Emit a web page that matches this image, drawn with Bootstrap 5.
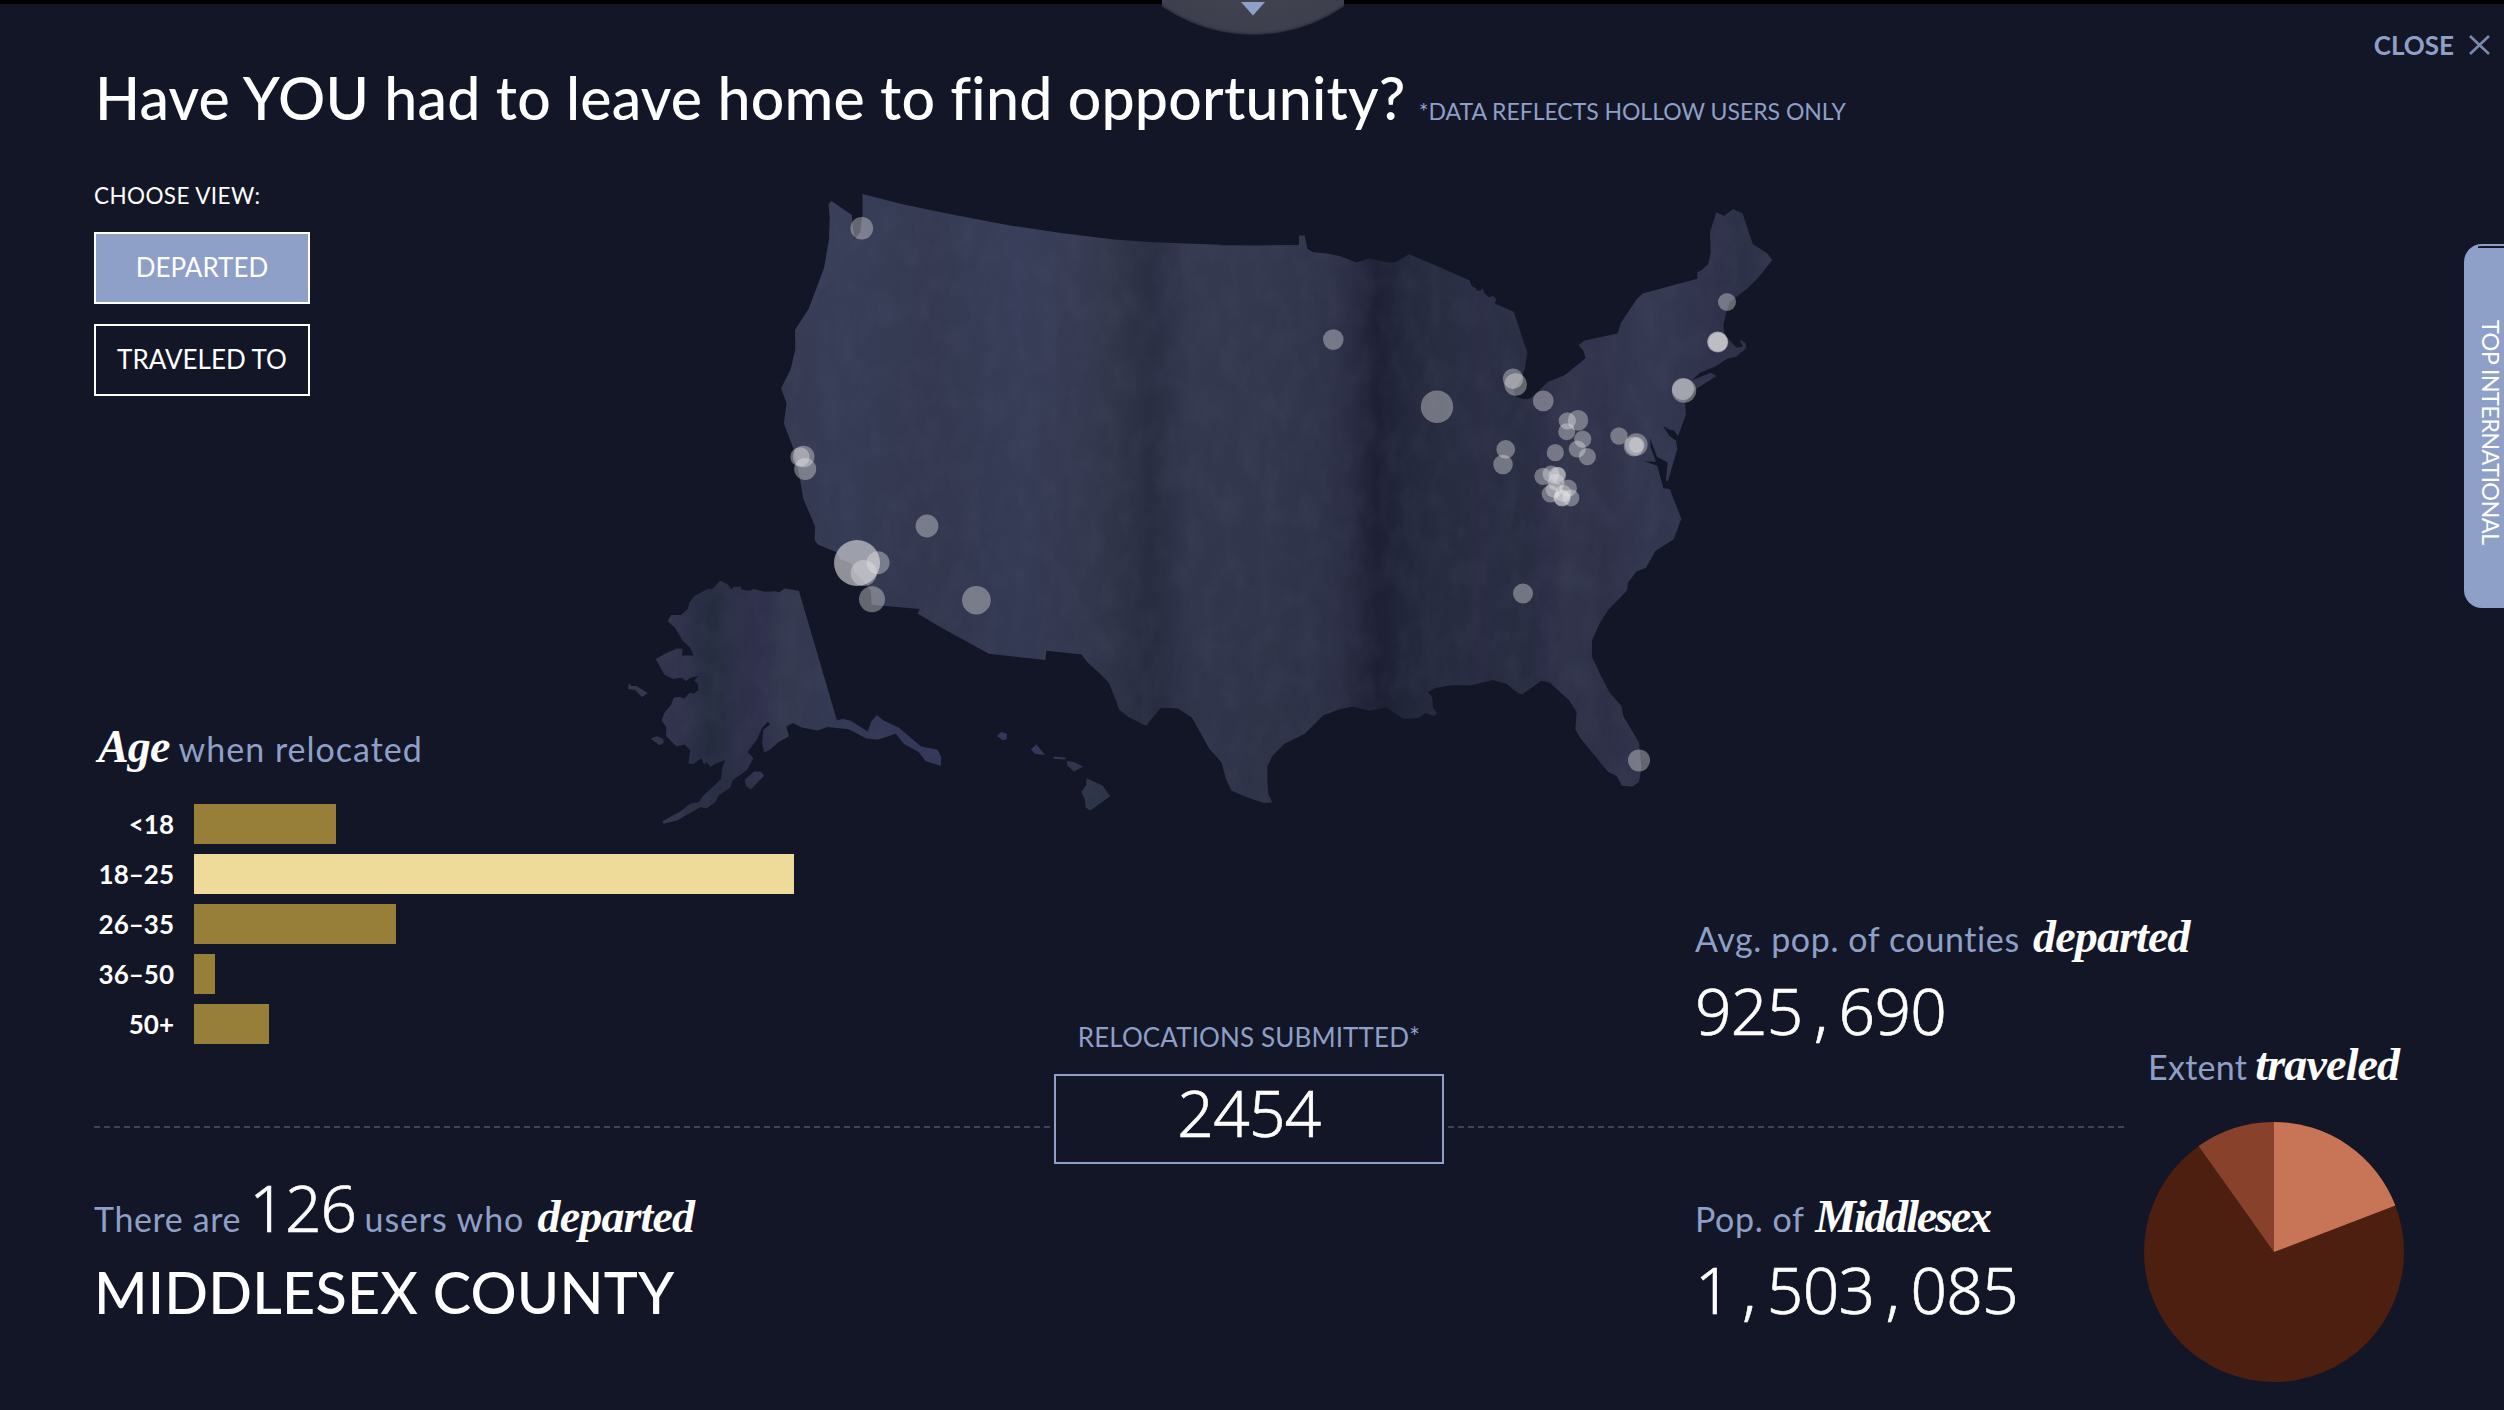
<!DOCTYPE html>
<html lang="en">
<head>
<meta charset="utf-8">
<meta name="viewport" content="width=device-width, initial-scale=1">
<title>Have YOU had to leave home to find opportunity?</title>
<link rel="stylesheet" href="https://cdn.jsdelivr.net/npm/bootstrap@5.3.0/dist/css/bootstrap.min.css">
<style>
  :root { --night:#131626; --steel:#8e9fc8; }
  body { background:var(--night); color:#fff; font-family:Lato,"Open Sans",sans-serif; width:2504px; height:1410px; overflow:hidden; }
  .top-strip { height:4px; background:#000; }
  .dial { left:1162px; top:0; width:182px; height:36px; }
  .page-head { height:156px; padding:0 14px 0 95px; }
  .page-title { font-size:59px; line-height:70px; font-weight:500; margin-top:59px; letter-spacing:.22px; }
  .page-note { font-size:23px; line-height:0; font-weight:400; margin-left:-2px; letter-spacing:-.03px; }
  .steel { color:var(--steel); }
  .close-link { margin-top:26px; font-size:26px; line-height:30px; font-weight:700; gap:15px; }
  .stage { height:884px; margin-bottom:-23px; padding-left:94px; }
  .side-left { width:506px; padding-top:21px; }
  .choose { font-size:22.5px; line-height:30px; margin-bottom:21px; letter-spacing:.4px; }
  .view-btn { width:216px; height:72px; border:2px solid #fff; border-radius:0; color:#fff; font-size:26px; line-height:30px; padding:0 0 2px; }
  .view-btn.active, .view-btn:hover { background:var(--steel)!important; color:#fff!important; border-color:#fff!important; }
  .caption-line { font-size:34px; line-height:50px; height:50px; color:var(--steel); letter-spacing:.6px; white-space:nowrap; }
  .caption-wide { letter-spacing:1px; }
  .script { font:italic 700 46px/0 "Liberation Serif",serif; color:#fff; letter-spacing:-.85px; margin-left:4px; }
  .script-tight { letter-spacing:-2.2px; margin-left:2px; }
  .inline-num { font:300 64px/0 "Noto Sans",sans-serif; color:#fff; letter-spacing:-.9px; -webkit-text-stroke:.6px #fff; margin-left:-1px; }
  .users { letter-spacing:.9px; margin-left:-1px; }
  .big-num { font:300 64px/64px "Noto Sans",sans-serif; color:#fff; letter-spacing:-.7px; height:64px; -webkit-text-stroke:.6px #fff; }
  .big-num i { display:inline-block; width:36px; text-align:center; font-style:normal; }
  .bars { gap:10px; margin-top:30px; }
  .bar-label { width:100px; padding-right:20px; font-size:26px; line-height:40px; font-weight:700; text-align:right; }
  .bar { height:40px; background:#977f39; }
  .bar.peak { background:#eeda99; }
  .map-col { width:1095px; }
  .us-map { width:1200px; height:700px; overflow:visible; }
  .side-right { padding-top:84px; }
  .tab-intl { width:40px; height:364px; border:2px solid var(--steel); border-right:0; border-radius:18px 0 0 18px; padding:74px 0 0 8px;
    background:linear-gradient(var(--night),var(--night)) 12px 0/100% 2px no-repeat var(--steel); writing-mode:vertical-rl; }
  .tab-intl span { font-size:23.5px; line-height:27px; letter-spacing:-.65px; white-space:nowrap; }
  .avg { margin-top:306px; }
  .mt-15 { margin-top:15px; }
  .lower { padding-left:94px; }
  .lower-main { width:2030px; }
  .dash { height:2px; margin-top:105px; background:repeating-linear-gradient(90deg,#3d4359 0 6px,transparent 6px 10px); }
  .submitted { width:390px; margin:0 4px 0 1px; }
  .submitted-label { font-size:26px; line-height:30px; padding-top:1px; margin-bottom:22px; letter-spacing:.12px; }
  .submitted-box { height:90px; border:2px solid var(--steel); padding-top:5px; }
  .facts { margin-top:30px; }
  .fact-left { width:1601px; }
  .county { font-size:57.5px; line-height:64px; font-weight:500; margin-top:16px; letter-spacing:.2px; }
  .mt-14 { margin-top:14px; }
  .extent { margin:21px 0 0 20px; width:262px; }
  .extent .caption-line { letter-spacing:.3px; }
  .extent .script { margin-left:-1px; }
  .pie { width:260px; height:260px; margin-top:30px; }
</style>
</head>
<body class="position-relative d-flex flex-column">
<div class="top-strip flex-shrink-0"></div>
<svg class="dial position-absolute" viewBox="0 0 182 36">
  <defs><radialGradient id="dg" gradientUnits="userSpaceOnUse" cx="91" cy="-126" r="162"><stop offset=".8" stop-color="#40424f"/><stop offset=".97" stop-color="#3d3f4e"/><stop offset=".985" stop-color="#343645"/><stop offset="1" stop-color="#11131f"/></radialGradient></defs>
  <circle cx="91" cy="-126" r="161" fill="url(#dg)"/>
  <path d="M79 2H103L91 15.5Z" fill="#8e9fcb"/>
</svg>

<header class="page-head d-flex justify-content-between align-items-start flex-shrink-0">
  <h1 class="page-title mb-0">Have YOU had to leave home to find opportunity? <span class="page-note steel">*DATA REFLECTS HOLLOW USERS ONLY</span></h1>
  <a class="close-link d-flex align-items-center steel text-decoration-none">CLOSE
    <svg width="21" height="20" viewBox="0 0 21 20"><path d="M1 1L20 19M20 1L1 19" stroke="#7c89ae" stroke-width="2.6" fill="none"/></svg>
  </a>
</header>

<main class="stage d-flex flex-shrink-0">
  <section class="side-left d-flex flex-column flex-shrink-0">
    <div class="choose">CHOOSE VIEW:</div>
    <div class="d-flex flex-column align-items-start" style="gap:20px">
      <button class="btn view-btn active">DEPARTED</button>
      <button class="btn view-btn">TRAVELED TO</button>
    </div>
    <div class="mt-auto">
      <div class="caption-line caption-wide"><span class="script ms-1">Age</span> when relocated</div>
      <div class="bars d-flex flex-column">
        <div class="d-flex"><div class="bar-label flex-shrink-0">&lt;18</div><div class="bar" style="width:142px"></div></div>
        <div class="d-flex"><div class="bar-label flex-shrink-0">18–25</div><div class="bar peak flex-shrink-0" style="width:600px"></div></div>
        <div class="d-flex"><div class="bar-label flex-shrink-0">26–35</div><div class="bar" style="width:202px"></div></div>
        <div class="d-flex"><div class="bar-label flex-shrink-0">36–50</div><div class="bar" style="width:21px"></div></div>
        <div class="d-flex"><div class="bar-label flex-shrink-0">50+</div><div class="bar" style="width:75px"></div></div>
      </div>
    </div>
  </section>

  <section class="map-col flex-shrink-0">
    <svg class="us-map" viewBox="0 0 1200 700">
      <defs>
        <clipPath id="land">
          <path transform="scale(.39541 .44643)" d="M664,76L770,100L900,124L1040,147L1170,164L1300,178L1400,184L1568,190V1345L1541,1319L1520,1285L1497,1249L1461,1228L1418,1227L1381,1267L1338,1248L1313,1231L1303,1206L1287,1171L1265,1151L1234,1126L1217,1107L1129,1099L1126,1120L984,1106L868,1050L803,1016L809,1006L687,996L685,965L668,945L645,925L636,903L607,894L598,878L552,862L543,852L544,821L514,758L505,710L490,648L465,590L472,545L458,511L482,469L494,425L493,381L528,333L567,241L579,178L581,127L578,99L585,92L637,123L639,150L644,177L658,163L664,120Z"/>
          <path transform="translate(580 40) scale(.33333 .39541)" d="M0,110L90,114L230,115L357,114V90H374L382,123L398,132L440,135L482,142L529,158L569,148L605,154L628,159L650,156L687,137L760,163L867,203L877,220L887,223L888,230H900V1222L873,1227H812L767,1234L744,1244L757,1259L759,1286L771,1297L763,1305L738,1297L716,1310L669,1312L620,1283L568,1292L519,1281L480,1287L430,1303L374,1350L312,1376L277,1406L262,1432V1475L265,1503L277,1524L253,1525L205,1512L155,1494L138,1464L125,1423L88,1387L63,1345L38,1310L0,1289Z"/>
          <path transform="translate(800 20) scale(.33333 .40816)" d="M100,208L209,246L215,260L229,266L228,271H241L249,265L252,276L266,287L279,284L288,291L285,303L341,323L382,423L375,460L362,490L340,515L348,531L372,537L390,536L414,518L443,495L495,478L557,437L550,418L536,405L554,393L653,376L663,350L710,292L728,278L892,242V226L904,222L925,206L932,178L930,128L949,79L972,88L1000,71L1028,82L1058,157L1102,180L1117,196L1075,239L1043,265L990,298L978,325L970,356L974,380L1010,411L1029,408L1018,390L1037,400L1038,413L1008,433L984,437L945,457L900,472L875,491L932,472L950,480L890,511L855,545L858,574L834,627L822,614L808,612L789,602L808,627L828,638L832,659L803,739L798,735L803,692L771,678L750,632L752,655L768,690L732,689L772,700L790,755L809,757L844,830L821,880L766,909L738,950L709,959L684,986L681,1006L625,1053L599,1086L576,1128V1168L600,1211L629,1256L664,1289L670,1314L717,1379L724,1440L717,1475L698,1486L666,1484L650,1460L624,1450L540,1366L526,1345L530,1303L507,1274L449,1232L425,1227L367,1260L356,1258L320,1235L279,1225L210,1238L155,1237Z"/>
        </clipPath>
        <clipPath id="isles">
          <path transform="scale(.39541 .44643)" d="M503,965L599,1255L615,1252L634,1256L677,1280L686,1258L700,1243L718,1256L756,1272L812,1314L854,1321L863,1338L862,1357L824,1347L806,1326L769,1308L748,1285L703,1298L674,1296L629,1275L575,1270L551,1278L510,1271L488,1261L471,1269L478,1291L451,1304L431,1320L415,1327L410,1305L413,1276L430,1265L425,1258L409,1273L397,1298L373,1326L388,1340L371,1367L336,1389L329,1406L300,1423L292,1438L270,1452L253,1450L196,1479L160,1487L158,1481L205,1458L228,1442L250,1438L260,1425L306,1387L309,1362L316,1344L290,1353L280,1359L268,1348L264,1355L256,1340L236,1353L224,1352L228,1322L214,1309L193,1313L167,1290L168,1271L156,1255L163,1238L179,1222L187,1204L203,1203L213,1207L226,1194L238,1195L249,1187L247,1173L238,1166L250,1155L229,1160L218,1167L206,1160L184,1162L163,1153L141,1118L167,1105L194,1094L209,1095L207,1110H237L228,1092L209,1077L190,1048L171,1033L180,1019H205L222,1006L226,991L238,977L271,961L286,960L304,942L323,951L333,962L338,956H356L358,962L379,965L388,961L416,967L444,966L453,969L467,960ZM366,1388L390,1370L406,1370L415,1379L381,1410L369,1401ZM128,1296L145,1291L160,1297L161,1306L150,1311ZM73,1172L79,1178L92,1178L120,1194L106,1203L89,1187L71,1185ZM1004,1290L1014,1281L1029,1285V1297L1019,1300ZM1090,1320L1104,1309L1125,1333L1100,1330ZM1149,1336L1179,1339L1175,1343L1146,1341ZM1181,1346L1200,1349L1222,1359L1198,1370L1182,1356ZM1230,1385L1271,1401L1290,1425L1240,1457L1228,1450L1227,1435L1218,1415L1230,1400Z"/>
        </clipPath>
        <linearGradient id="cloth" gradientUnits="userSpaceOnUse" x1="180" y1="0" x2="1180" y2="0">
          <stop offset="0" stop-color="#383c54"/><stop offset=".06" stop-color="#393e59"/><stop offset=".15" stop-color="#363b53"/><stop offset=".24" stop-color="#393e5a"/><stop offset=".31" stop-color="#373b52"/><stop offset=".345" stop-color="#303549"/><stop offset=".37" stop-color="#2a2f44"/><stop offset=".39" stop-color="#303349"/><stop offset=".41" stop-color="#353a51"/><stop offset=".49" stop-color="#34394f"/><stop offset=".55" stop-color="#31354c"/><stop offset=".572" stop-color="#2b2d44"/><stop offset=".597" stop-color="#1e2135"/><stop offset=".625" stop-color="#25293d"/><stop offset=".66" stop-color="#292e42"/><stop offset=".7" stop-color="#2c2f46"/><stop offset=".745" stop-color="#2b3045"/><stop offset=".765" stop-color="#2f2f4a"/><stop offset=".785" stop-color="#34384f"/><stop offset=".825" stop-color="#32344d"/><stop offset=".87" stop-color="#363b53"/><stop offset=".93" stop-color="#31334d"/><stop offset=".96" stop-color="#2d3147"/><stop offset="1" stop-color="#34374f"/>
        </linearGradient>
        <linearGradient id="clothB" gradientUnits="userSpaceOnUse" x1="28" y1="0" x2="520" y2="0">
          <stop offset="0" stop-color="#33374e"/><stop offset=".1" stop-color="#31334d"/><stop offset=".165" stop-color="#262c40"/><stop offset=".2" stop-color="#2a2f44"/><stop offset=".23" stop-color="#2e304a"/><stop offset=".28" stop-color="#30314c"/><stop offset=".31" stop-color="#34394f"/><stop offset=".6" stop-color="#34385a"/><stop offset=".85" stop-color="#33365a"/><stop offset=".92" stop-color="#2f3549"/><stop offset="1" stop-color="#2d3447"/>
        </linearGradient>
        <linearGradient id="dusk" x1="0" y1="0" x2="0" y2="1"><stop offset=".1" stop-color="#131626" stop-opacity="0"/><stop offset="1" stop-color="#131626" stop-opacity=".18"/></linearGradient>
        <filter id="grain" x="0" y="0" width="100%" height="100%"><feTurbulence type="fractalNoise" baseFrequency=".05 .03" numOctaves="3" seed="4"/><feColorMatrix values="0 0 0 0 .1  0 0 0 0 .11  0 0 0 0 .18  1.4 0 0 0 -.5"/></filter>
      </defs>
      <g clip-path="url(#land)"><rect width="1200" height="700" fill="url(#cloth)"/><rect width="1200" height="700" fill="url(#dusk)"/><rect width="1200" height="700" filter="url(#grain)" opacity=".2"/></g>
      <g clip-path="url(#isles)"><rect width="1200" height="700" fill="url(#clothB)"/><rect width="1200" height="700" filter="url(#grain)" opacity=".2"/></g>
      <g fill="#e9e9ea" fill-opacity=".38" transform="translate(-600 -160)">
        <circle cx="861.8" cy="228.3" r="11.3"/><circle cx="800" cy="456.9" r="9.7"/><circle cx="803.6" cy="456.5" r="10.8"/><circle cx="805.2" cy="469" r="11"/><circle cx="927" cy="526" r="11.4"/>
        <circle cx="857" cy="563" r="23" fill-opacity=".58"/><circle cx="863.7" cy="573" r="13"/><circle cx="878" cy="562.7" r="11.5"/><circle cx="872" cy="599.3" r="13"/><circle cx="976.4" cy="600.2" r="14.3"/>
        <circle cx="1333.3" cy="339.6" r="10.3"/><circle cx="1437" cy="406.8" r="16.2"/>
        <circle cx="1513" cy="378.8" r="10.2"/><circle cx="1515.7" cy="384.5" r="11.3"/><circle cx="1543.3" cy="400.8" r="10.4"/>
        <circle cx="1567.3" cy="420.8" r="8.6"/><circle cx="1578" cy="420.4" r="10.3"/><circle cx="1566.7" cy="431.8" r="8.5"/><circle cx="1582.7" cy="439.2" r="8.6"/><circle cx="1577.3" cy="449" r="8.6"/><circle cx="1587.3" cy="456.7" r="8.6"/><circle cx="1555.3" cy="452.7" r="8.6"/>
        <circle cx="1505.7" cy="449.4" r="9.3"/><circle cx="1503" cy="464.5" r="9.8"/>
        <circle cx="1619" cy="436" r="8.7"/><circle cx="1636.3" cy="444.5" r="11.3"/><circle cx="1633.7" cy="446.5" r="10"/><circle cx="1636.7" cy="445" r="7.8"/>
        <circle cx="1543" cy="476.3" r="8.6"/><circle cx="1551" cy="473.9" r="8.5"/><circle cx="1557.3" cy="475.5" r="8.8"/><circle cx="1558" cy="474.6" r="7.5"/><circle cx="1556.3" cy="482.4" r="8.4"/><circle cx="1550.3" cy="493.9" r="8.6"/><circle cx="1554" cy="489.4" r="8.4"/><circle cx="1568.3" cy="488.2" r="8.6"/><circle cx="1563.3" cy="493.5" r="8.4"/><circle cx="1562" cy="498" r="8.6"/><circle cx="1562" cy="498" r="8"/><circle cx="1571" cy="498" r="8.4"/>
        <circle cx="1523" cy="593.5" r="10"/><circle cx="1717.7" cy="342" r="10.6"/><circle cx="1717.7" cy="342" r="10.2"/><circle cx="1718" cy="342" r="9.6"/><circle cx="1727" cy="302" r="9"/>
        <circle cx="1683" cy="389" r="11"/><circle cx="1684" cy="390.6" r="12.2"/><circle cx="1639" cy="760.4" r="11"/>
      </g>
    </svg>
  </section>

  <section class="side-right flex-grow-1 d-flex flex-column">
    <div class="tab-intl ms-auto"><span>TOP INTERNATIONAL</span></div>
    <div class="avg">
      <div class="caption-line">Avg. pop. of counties <span class="script">departed</span></div>
      <div class="big-num mt-15">925<i>,</i>690</div>
    </div>
  </section>
</main>

<section class="lower d-flex align-items-start">
  <div class="lower-main flex-shrink-0">
    <div class="d-flex align-items-start">
      <div class="dash" style="width:959px"></div>
      <div class="submitted text-center flex-shrink-0">
        <div class="submitted-label steel">RELOCATIONS SUBMITTED*</div>
        <div class="submitted-box"><div class="big-num">2454</div></div>
      </div>
      <div class="dash flex-grow-1"></div>
    </div>
    <div class="facts d-flex">
      <div class="fact-left">
        <div class="caption-line">There are <span class="inline-num">126</span> <span class="users">users who</span> <span class="script">departed</span></div>
        <div class="county">MIDDLESEX COUNTY</div>
      </div>
      <div>
        <div class="caption-line">Pop. of <span class="script script-tight">Middlesex</span></div>
        <div class="big-num mt-14 text-nowrap">1<i>,</i>503<i>,</i>085</div>
      </div>
    </div>
  </div>
  <div class="extent">
    <div class="caption-line ps-1">Extent <span class="script">traveled</span></div>
    <svg class="pie d-block" viewBox="-130 -130 260 260">
      <circle r="130" fill="#4d1f10"/>
      <path d="M0 0V-130A130 130 0 0 1 121.4 -46.4Z" fill="#c77556"/>
      <path d="M0 0L-75.4 -105.9A130 130 0 0 1 0 -130Z" fill="#88412a"/>
    </svg>
  </div>
</section>
<script src="https://cdn.jsdelivr.net/npm/bootstrap@5.3.0/dist/js/bootstrap.bundle.min.js"></script>
</body>
</html>
